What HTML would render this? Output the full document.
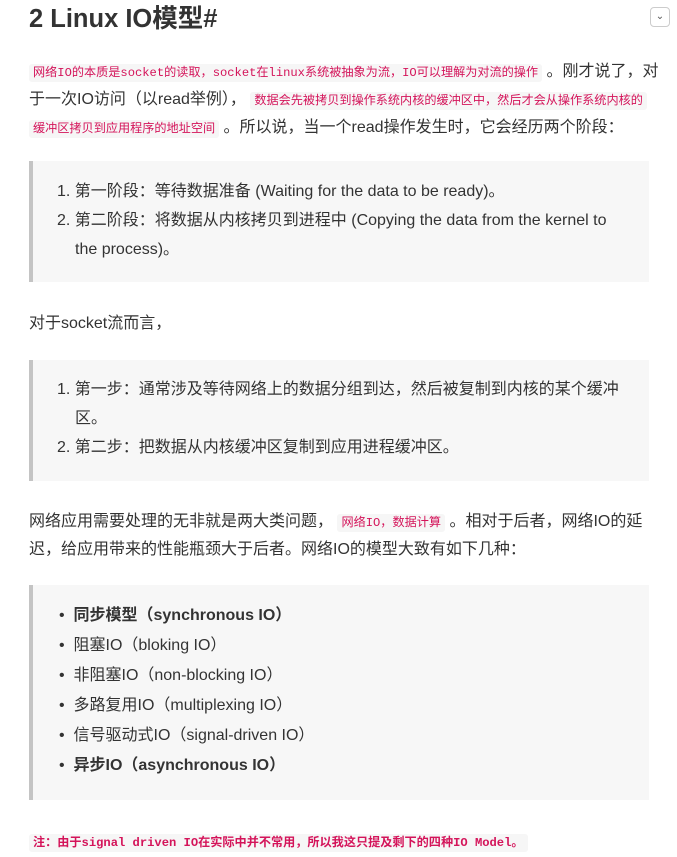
<!DOCTYPE html>
<html><head><meta charset="utf-8"><style>
*{margin:0;padding:0;box-sizing:border-box}
body{width:677px;height:856px;background:#fff;position:relative;font-family:"Liberation Sans","Noto Sans CJK SC",sans-serif;color:#333;font-size:16px;overflow:hidden}
h2{position:absolute;left:29px;top:2px;font-size:25.5px;font-weight:bold;color:#333;line-height:34px;white-space:nowrap}
.code{font-family:"Liberation Mono","Noto Sans CJK SC",monospace;font-size:12.15px;color:#d4145a;background:#f6f6f6;border-radius:3px;padding:2px 4px}
.bq{position:absolute;left:29px;width:620px;background:#f7f7f7;border-left:4px solid #c4c4c4}
.p{position:absolute;left:29px;line-height:28px;white-space:nowrap;margin-top:2px}
.li{position:absolute;white-space:nowrap;line-height:28px;margin-top:2px}
.btn{position:absolute;left:650px;top:7px;width:20px;height:20px;border:1px solid #ccc;border-radius:4px;font-size:10px;text-align:center;line-height:18px;color:#555}
</style></head><body>
<h2>2 Linux IO模型#</h2>
<div class="btn">⌄</div>
<div class="p" style="top:56px"><span class="code">网络IO的本质是socket的读取，socket在linux系统被抽象为流，IO可以理解为对流的操作</span> 。刚才说了，对</div>
<div class="p" style="top:84px">于一次IO访问（以read举例）， <span class="code">数据会先被拷贝到操作系统内核的缓冲区中，然后才会从操作系统内核的</span></div>
<div class="p" style="top:112px"><span class="code">缓冲区拷贝到应用程序的地址空间</span> 。所以说，当一个read操作发生时，它会经历两个阶段：</div>

<div class="bq" style="top:161px;height:121px"></div>
<div class="li" style="left:57px;top:176px">1. 第一阶段：等待数据准备 (Waiting for the data to be ready)。</div>
<div class="li" style="left:57px;top:205px">2. 第二阶段：将数据从内核拷贝到进程中 (Copying the data from the kernel to</div>
<div class="li" style="left:75px;top:234px">the process)。</div>

<div class="p" style="top:308px">对于socket流而言，</div>

<div class="bq" style="top:360px;height:121px"></div>
<div class="li" style="left:57px;top:374px">1. 第一步：通常涉及等待网络上的数据分组到达，然后被复制到内核的某个缓冲</div>
<div class="li" style="left:75px;top:403px">区。</div>
<div class="li" style="left:57px;top:432px">2. 第二步：把数据从内核缓冲区复制到应用进程缓冲区。</div>

<div class="p" style="top:506px">网络应用需要处理的无非就是两大类问题， <span class="code">网络IO，数据计算</span> 。相对于后者，网络IO的延</div>
<div class="p" style="top:534px">迟，给应用带来的性能瓶颈大于后者。网络IO的模型大致有如下几种：</div>

<div class="bq" style="top:585px;height:215px"></div>
<div class="li" style="left:59px;top:600px">• &nbsp;<b>同步模型（synchronous IO）</b></div>
<div class="li" style="left:59px;top:630px">• &nbsp;阻塞IO（bloking IO）</div>
<div class="li" style="left:59px;top:660px">• &nbsp;非阻塞IO（non-blocking IO）</div>
<div class="li" style="left:59px;top:690px">• &nbsp;多路复用IO（multiplexing IO）</div>
<div class="li" style="left:59px;top:720px">• &nbsp;信号驱动式IO（signal-driven IO）</div>
<div class="li" style="left:59px;top:750px">• &nbsp;<b>异步IO（asynchronous IO）</b></div>

<div class="p" style="top:826px"><span class="code" style="font-weight:bold">注：由于signal driven IO在实际中并不常用，所以我这只提及剩下的四种IO Model。</span></div>
</body></html>
